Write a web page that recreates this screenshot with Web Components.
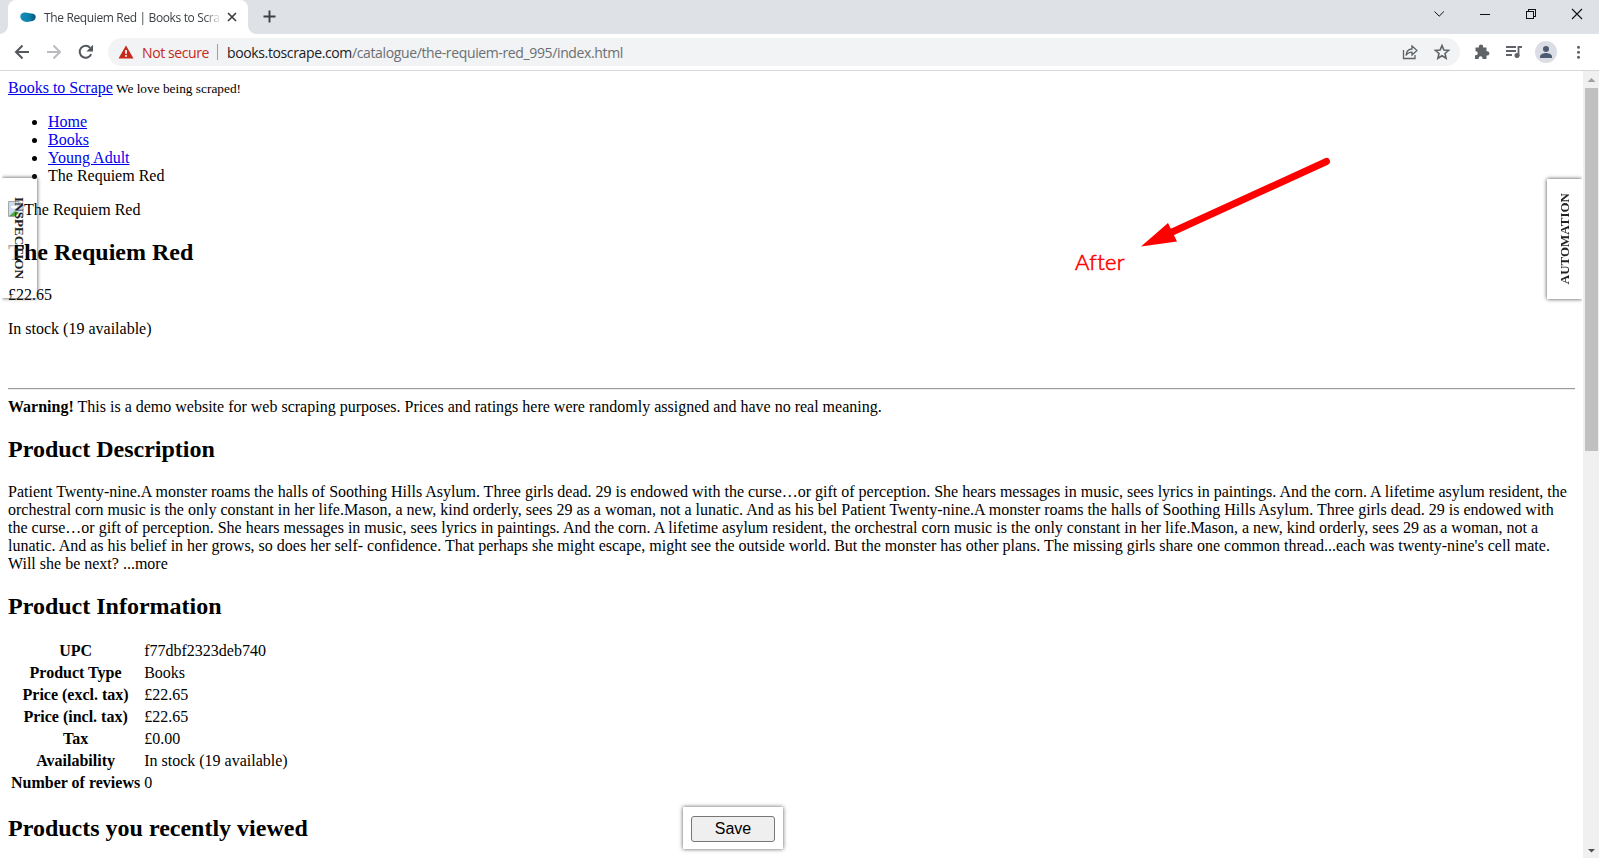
<!DOCTYPE html>
<html lang="en">
<head>
<meta charset="utf-8">
<title>The Requiem Red | Books to Scrape</title>
<style>
html,body{margin:0;height:100%;overflow:hidden;background:#fff}
</style>
</head>
<body>
<browser-window></browser-window>

<template id="t-window">
<style>
:host{display:flex;flex-direction:column;width:1599px;height:858px;overflow:hidden;position:relative;background:#fff}
.view{flex:1;min-height:0;display:flex}
book-page{flex:1;min-width:0}
side-tab.l{position:absolute;left:2px;top:178px}
side-tab.r{position:absolute;left:1547px;top:179px}
save-panel{position:absolute;left:683px;top:807px}
arrow-note{position:absolute;left:1070px;top:150px}
</style>
<tab-strip>The Requiem Red | Books to Scrape</tab-strip>
<address-bar><span slot="host">books.toscrape.com</span><span slot="path">/catalogue/the-requiem-red_995/index.html</span></address-bar>
<div class="view"><book-page></book-page><scroll-bar></scroll-bar></div>
<side-tab class="l" side="left">INSPECTION</side-tab>
<side-tab class="r" side="right">AUTOMATION</side-tab>
<arrow-note>After</arrow-note>
<save-panel>Save</save-panel>
</template>

<template id="t-tabs">
<style>
:host{display:flex;height:34px;background:#dee1e6;font:12px "Open Sans","Noto Sans",sans-serif;color:#3c4043;align-items:stretch}
.tab{margin-left:8px;width:240px;box-sizing:border-box;background:#fff;border-radius:8px 8px 0 0;display:flex;align-items:center;padding:0 10px 0 12px;position:relative}
.tab::before,.tab::after{content:"";position:absolute;bottom:0;width:8px;height:8px}
.tab::before{left:-8px;background:radial-gradient(circle at 0 0,transparent 7.5px,#fff 8px)}
.tab::after{right:-8px;background:radial-gradient(circle at 100% 0,transparent 7.5px,#fff 8px)}
.title{margin-left:8px;width:175px;overflow:hidden;white-space:nowrap;letter-spacing:-.36px;-webkit-mask:linear-gradient(90deg,#000 160px,transparent 178px)}
.x{margin-left:8px}
.plus{margin:10px 0 0 15px}
.win{margin-left:auto;display:flex}
svg{display:block;flex:none}
</style>
<div class="tab">
<svg width="16" height="16" viewBox="0 0 16 16"><defs><linearGradient id="g"><stop offset="0" stop-color="#1590b8"/><stop offset=".6" stop-color="#0b7fa9"/><stop offset="1" stop-color="#0a4f75"/></linearGradient></defs><path d="M.3 7.600C.3 4.800 2.800 3.300 5.500 3.500c2 .1 3.700.9 6 1 2.700.1 4.200 1.400 4.200 3.400 0 2.400-2 4-4.600 4.400-2.500.4-4.400 1.100-6.600.3C2 11.700.3 10 .3 7.600z" fill="url(#g)"/></svg>
<div class="title"><slot></slot></div>
<svg class="x" width="10" height="10" viewBox="0 0 10 10"><path d="M1 1l8 8M9 1l-8 8" stroke="#3c4043" stroke-width="1.7"/></svg>
</div>
<svg class="plus" width="13" height="13" viewBox="0 0 13 13"><path d="M6.500.5v12M.5 6.500h12" stroke="#3c4043" stroke-width="1.9"/></svg>
<svg class="win" width="219" height="34" viewBox="0 0 219 34" fill="none" stroke="#111"><path d="M54.500 11.500l4.700 4.700 4.700-4.700" stroke-width="1"/><path d="M100 14.500h10M146.500 11.500h7v7h-7zM148.500 11.500v-2h7v7h-2" shape-rendering="crispEdges"/><path d="M192 9l10 10M202 9l-10 10" stroke-width="1.100"/></svg>
</template>

<template id="t-address">
<style>
:host{display:flex;height:36px;align-items:center;background:#fff;border-bottom:1px solid #d6d8db;font:14px "Open Sans","Noto Sans",sans-serif;color:#202124}
svg{display:block;flex:none}
.pill{flex:none;width:1352px;height:28px;border-radius:14px;background:#f1f3f4;display:flex;align-items:center;box-sizing:border-box;padding-left:10px;white-space:nowrap}
.warn{color:#c5281c;margin-left:8px;width:68px;letter-spacing:-.4px}
.sep{width:1px;height:16px;background:#9aa0a6;margin:0 9px 0 7px}
.url{letter-spacing:-.37px}
.path{color:#6b6f73}
.acts{margin-left:auto}
</style>
<svg width="108" height="36" viewBox="0 0 108 36" fill="none" stroke="#54585d" stroke-width="2"><path d="M29 18H16.500M22.500 11.500L16 18l6.500 6.500"/><path d="M47 18h12.500M53.500 11.500L60 18l-6.500 6.500" stroke="#b9bbbe"/><path d="M91.200 20.200A6 6 0 1 1 90.200 13.800"/><path d="M93 10.800v6.600h-6.600z" fill="#54585d" stroke="none"/></svg>
<div class="pill">
<svg width="16" height="16" viewBox="0 0 16 16"><path d="M8 1.500L15.500 14.500H.5z" fill="#c5281c"/><path d="M8 6v3.700M8 11v1.700" stroke="#fff" stroke-width="1.700"/></svg>
<span class="warn">Not secure</span><span class="sep"></span>
<span class="url"><slot name="host"></slot><span class="path"><slot name="path"></slot></span></span>
<svg class="acts" width="60" height="28" viewBox="0 0 60 28" fill="none" stroke="#5f6368" stroke-width="1.300"><path d="M3.500 12v8.500h11.500V17M6 17.500c.3-4.200 2.500-6.300 6-6.500V8l5 4.600-5 4.500v-3c-2.800 0-4.500 1-6 3.400z"/><path d="M42 7.600l1.900 4.400 4.700.4-3.600 3.100 1.100 4.700-4.100-2.500-4.100 2.500 1.100-4.700-3.600-3.100 4.700-.4z" stroke-width="1.600"/></svg>
</div>
<svg width="139" height="36" viewBox="0 0 139 36" fill="#5f6368"><path d="M15.500 13.500h3.300v-.8a2.200 2.200 0 0 1 4.400 0v.8h3.300v3.800h.8a2.100 2.100 0 0 1 0 4.200h-.8V25h-4v-.8a1.900 1.900 0 0 0-3.800 0v.8h-3.700v-3.800h.8a2 2 0 0 0 0-4h-.3z"/><path d="M46 13h10M46 17h10M46 21h6M58.500 22v-9H62" fill="none" stroke="#5f6368" stroke-width="1.800"/><circle cx="57" cy="21.500" r="2.500"/><circle cx="86" cy="18" r="11" fill="#dadde3"/><circle cx="86" cy="15" r="3" fill="#4c5b72"/><path d="M80 24v-1.500c0-2.500 4-3.500 6-3.500s6 1 6 3.500V24z" fill="#4c5b72"/><circle cx="118.500" cy="13.300" r="1.500"/><circle cx="118.500" cy="18.300" r="1.500"/><circle cx="118.500" cy="23.300" r="1.500"/></svg>
</template>

<template id="t-page">
<style>
:host{display:block;box-sizing:border-box;padding:8px;overflow:hidden;font:16px/18px "Liberation Serif",serif;color:#000}
a{color:#00e;text-decoration:underline}
small{font-size:13.330px;margin-left:-1px}
ul{margin:15px 0 16px;padding-left:40px}
p{margin:16px 0}
h2{font-size:24px;line-height:27px;margin:20px 0}
hr{margin:8px 0;border:solid;border-width:1px 0;height:0;border-color:#9a9a9a #ededed #ededed}
.ph{display:flex}
.desc{white-space:nowrap}
.desc span{display:block;width:max-content}
product-table{margin:-1px 0 0}
</style>
<div><a>Books to Scrape</a> <small>We love being scraped!</small></div>
<ul><li><a>Home</a></li><li><a>Books</a></li><li><a>Young Adult</a></li><li>The Requiem Red</li></ul>
<div class="ph"><svg width="16" height="16" viewBox="0 0 16 16"><path d="M.5 .5H11l4 4v11H.5z" fill="#c9dcf5" stroke="#a8a8a8"/><path d="M11 .5v4h4" fill="#fff" stroke="#a8a8a8"/><ellipse cx="6" cy="6" rx="3" ry="1.500" fill="#fff"/><path d="M1 15l6-5 4 2v3z" fill="#4faa43"/><path d="M8 15l7-8v3l-4 5z" fill="#fff"/></svg>The Requiem Red</div>
<h2>The Requiem Red</h2>
<p>£22.65</p>
<p>In stock (19 available)</p>
<p>&nbsp;</p>
<hr>
<div><b>Warning!</b> This is a demo website for web scraping purposes. Prices and ratings here were randomly assigned and have no real meaning.</div>
<h2>Product Description</h2>
<p class="desc"><span>Patient Twenty-nine.A monster roams the halls of Soothing Hills Asylum. Three girls dead. 29 is endowed with the curse…or gift of perception. She hears messages in music, sees lyrics in paintings. And the corn. A lifetime asylum resident, the</span><span>orchestral corn music is the only constant in her life.Mason, a new, kind orderly, sees 29 as a woman, not a lunatic. And as his bel Patient Twenty-nine.A monster roams the halls of Soothing Hills Asylum. Three girls dead. 29 is endowed with</span><span>the curse…or gift of perception. She hears messages in music, sees lyrics in paintings. And the corn. A lifetime asylum resident, the orchestral corn music is the only constant in her life.Mason, a new, kind orderly, sees 29 as a woman, not a</span><span>lunatic. And as his belief in her grows, so does her self- confidence. That perhaps she might escape, might see the outside world. But the monster has other plans. The missing girls share one common thread...each was twenty-nine's cell mate.</span><span>Will she be next? ...more</span></p>
<h2>Product Information</h2>
<product-table></product-table>
<h2>Products you recently viewed</h2>
</template>

<template id="t-scroll">
<style>
:host{display:flex;flex-direction:column;width:16px;background:#f0f0f0;align-items:center;flex:none}
.thumb{width:13px;height:363px;background:#c0c0c0}
svg{display:block}
.down{margin-top:auto}
</style>
<svg width="16" height="17" viewBox="0 0 16 17"><path d="M4.500 11L8.500 7l4 4z" fill="#a0a0a0"/></svg>
<div class="thumb"></div>
<svg class="down" width="16" height="17" viewBox="0 0 16 17"><path d="M5 8h7l-3.500 3.500z" fill="#505050"/></svg>
</template>

<template id="t-side">
<style>
:host{display:flex;width:35px;height:120px;box-sizing:border-box;align-items:center;justify-content:center;font:bold 13px "Liberation Serif",serif;color:#222;box-shadow:0 0 4px #444}
:host([side=right]){background:#fff;clip-path:inset(-5px 0 -5px -5px)}
:host([side=left]){padding-right:2px;font-size:13.200px;background:linear-gradient(rgba(255,255,255,.65),rgba(255,255,255,.65)) 5px 62px/8px 22px no-repeat;clip-path:inset(-5px -5px -5px 0)}
span{writing-mode:vertical-rl;white-space:nowrap}
:host([side=right]) span{transform:rotate(180deg)}
</style>
<span><slot></slot></span>
</template>

<template id="t-note">
<style>
:host{display:block;width:270px;height:130px;font:300 22px Lato,sans-serif;color:#f00}
svg{display:block}
.t{position:absolute;left:5px;top:98px;line-height:28px;letter-spacing:.35px;-webkit-text-stroke:.6px #f00}
</style>
<svg width="270" height="130" viewBox="0 0 270 130"><path d="M256.500 11.500L100 83" stroke="#f00" stroke-width="7" stroke-linecap="round"/><path d="M71 96.500L98 73l9 18.500z" fill="#f00"/></svg>
<span class="t"><slot></slot></span>
</template>

<template id="t-save">
<style>
:host{display:block;box-sizing:border-box;width:100px;height:42px;padding:9px 8px 7px;background:#fff;box-shadow:0 0 4px #555}
button{display:block;width:84px;height:26px;box-sizing:border-box;padding:0;border:1px solid #767676;border-radius:3px;background:#efefef;font:16px "Liberation Sans",sans-serif;color:#000}
</style>
<button><slot></slot></button>
</template>

<script>
function define(name, id) {
  customElements.define(name, class extends HTMLElement {
    constructor() {
      super();
      this.attachShadow({ mode: 'open' }).append(document.getElementById(id).content.cloneNode(true));
    }
  });
}
class ProductTable extends HTMLElement {
  connectedCallback() {
    const rows = [['UPC', 'f77dbf2323deb740'], ['Product Type', 'Books'], ['Price (excl. tax)', '£22.65'], ['Price (incl. tax)', '£22.65'], ['Tax', '£0.00'], ['Availability', 'In stock (19 available)'], ['Number of reviews', '0']];
    this.attachShadow({ mode: 'open' }).innerHTML = '<style>:host{display:block}table{border-spacing:2px;font:inherit}th,td{padding:1px}</style><table>' +
      rows.map(r => `<tr><th>${r[0]}</th><td>${r[1]}</td></tr>`).join('') + '</table>';
  }
}
customElements.define('product-table', ProductTable);
define('tab-strip', 't-tabs');
define('address-bar', 't-address');
define('book-page', 't-page');
define('scroll-bar', 't-scroll');
define('side-tab', 't-side');
define('arrow-note', 't-note');
define('save-panel', 't-save');
define('browser-window', 't-window');
</script>
</body>
</html>
